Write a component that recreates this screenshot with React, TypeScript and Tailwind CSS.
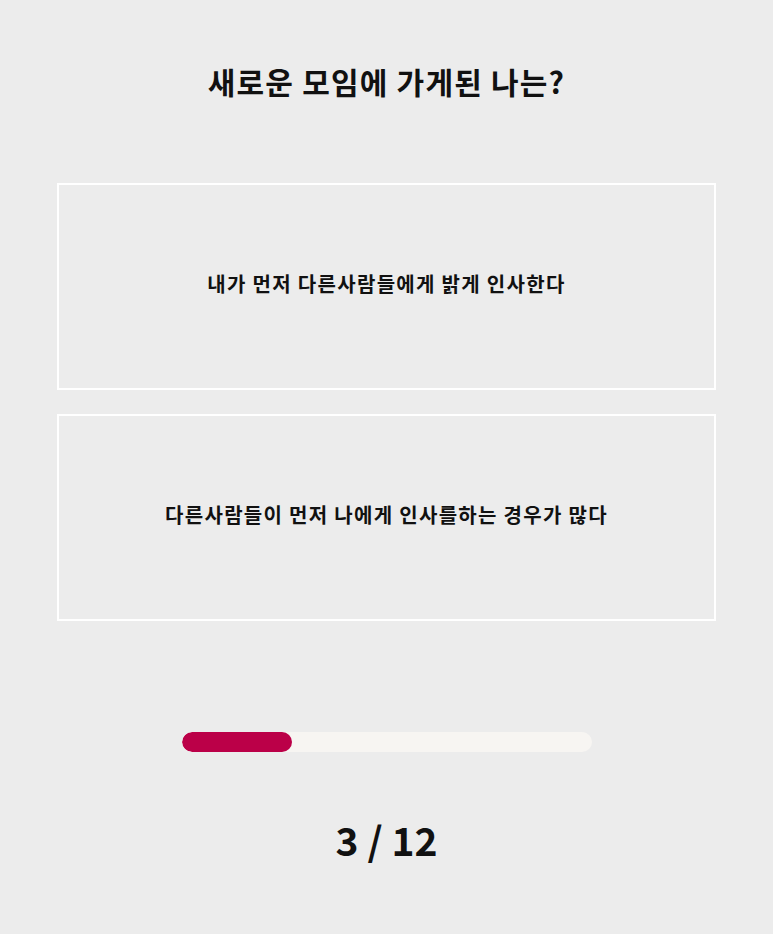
import { useState } from "react";

const answers = [
  "내가 먼저 다른사람들에게 밝게 인사한다",
  "다른사람들이 먼저 나에게 인사를하는 경우가 많다",
];

export default function App() {
  const [step] = useState(3);
  const total = 12;

  return (
    <div
      className="min-h-screen w-full bg-[#ececec] text-[#111] flex flex-col items-center"
      style={{ fontFamily: '"Noto Sans CJK KR", "Noto Sans", sans-serif' }}
    >
      {/* Question */}
      <h1 className="mt-[56px] text-[30px] font-bold leading-[50px] tracking-[1.2px]">
        새로운 모임에 가게된 나는?
      </h1>

      {/* Answer options */}
      <div className="mt-[77px] w-full px-[57px] flex flex-col gap-[24px]">
        {answers.map((a) => (
          <button
            key={a}
            className="h-[207px] w-full border-2 border-white flex items-center justify-center pb-[6px] text-[20px] font-bold tracking-[1.3px]"
          >
            {a}
          </button>
        ))}
      </div>

      {/* Progress */}
      <div className="mt-[111px] w-[410px] h-[20px] rounded-full bg-[#f7f5f2] overflow-hidden">
        <div className="h-full w-[110px] rounded-full bg-[#bb0048]" />
      </div>

      <div className="mt-[59px] text-[39px] font-bold leading-[56px]">
        {step} / {total}
      </div>
    </div>
  );
}
